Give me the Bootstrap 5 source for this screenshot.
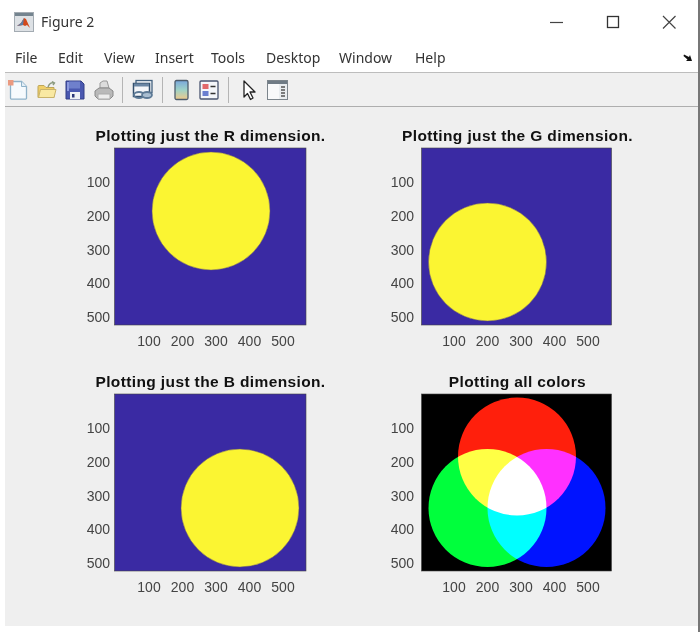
<!DOCTYPE html>
<html lang="en"><head><meta charset="utf-8"><title>Figure 2</title>
<link rel="stylesheet" href="https://cdn.jsdelivr.net/npm/bootstrap@5.3.0/dist/css/bootstrap.min.css">
<style>
html,body{margin:0;background:#fff;overflow:hidden}
body{font-family:"Noto Sans","Open Sans",sans-serif;color:#222}
.win{width:700px;height:632px;background:#fff;border-right:2px solid #777;filter:blur(.55px)}
.winbar{height:45px;padding:0 0 2px 14px;font-size:14px;color:#333}
.winbar .appico{margin-right:7px}
.winctl{margin-left:auto;padding-right:21px;gap:40.500px}
.menubar{height:27px;padding:0 5px 3px 15px;font-size:14px;color:#333}
.menubar span{display:block;white-space:nowrap}
.menubar span:nth-child(1){width:43px}
.menubar span:nth-child(2){width:46px}
.menubar span:nth-child(3){width:51px}
.menubar span:nth-child(4){width:56px}
.menubar span:nth-child(5){width:55px}
.menubar span:nth-child(6){width:73px}
.menubar span:nth-child(7){width:76px}
.menubar .corner{margin-left:auto}
.tools{margin-left:5px;height:35px;background:#f0f0f0;border-top:1px solid #bdbdbd;border-bottom:1px solid #aeaeae;padding-left:3px;gap:8.500px}
.tools .tsep{width:1px;height:26px;background:#b5b5b5}
.stage{margin-left:5px;width:693px;height:519px;padding-top:1px;background:#efefef;display:grid;grid-template-columns:306.5px 1fr;grid-template-rows:246px 1fr}
.stage svg{display:block;overflow:visible}
.ttl{font:bold 15.5px "Liberation Sans",Arial,sans-serif;letter-spacing:.38px;fill:#111;text-anchor:middle}
.tk{font:14px "Liberation Sans",Arial,sans-serif;fill:#444}
.tx{text-anchor:middle}.ty{text-anchor:end}
.axbg{fill:#3a2aa3;stroke:#444;stroke-width:.6}
.axblk{fill:#000;stroke:#444;stroke-width:.6}
.sun{fill:#fbf532;stroke:#6b5a6a;stroke-width:.5}
.mix{isolation:isolate}
.mix circle{mix-blend-mode:screen}
</style></head><body>
<div class="win">
 <div class="winbar d-flex align-items-center">
  <svg class="appico" width="20" height="20" viewBox="0 0 20 20"><rect x=".5" y=".5" width="19" height="19" fill="#dde1e5" stroke="#a3abb2"/><rect x="1" y="1" width="18" height="3" fill="#74848f"/><path d="M3 14l4-3 3-5 2 1 4 9-3-3-2 1-2-1z" fill="#d2491c"/><path d="M3 14l4-3 3-5-1 7z" fill="#5a7fa8"/></svg>
  <span>Figure 2</span>
  <div class="winctl d-flex align-items-center">
   <svg width="16" height="16" viewBox="0 0 16 16"><path d="M2 8.500h13" stroke="#444" stroke-width="1.200"/></svg>
   <svg width="16" height="16" viewBox="0 0 16 16"><rect x="2.500" y="2.500" width="11" height="11" fill="none" stroke="#333" stroke-width="1.300"/></svg>
   <svg width="16" height="16" viewBox="0 0 16 16"><path d="M2 2l12.500 12.500M14.500 2L2 14.500" stroke="#444" stroke-width="1.200"/></svg>
  </div>
 </div>
 <div class="menubar d-flex align-items-center">
  <span>File</span><span>Edit</span><span>View</span><span>Insert</span><span>Tools</span><span>Desktop</span><span>Window</span><span>Help</span>
  <svg class="corner" width="10" height="9" viewBox="0 0 10 9"><path d="M1 1.500l5 2.500 1-2 2 6-6 0 1.500-1.500L.500 3z" fill="#111"/></svg>
 </div>
 <div class="tools d-flex align-items-center">
  <svg width="20" height="22" viewBox="0 0 20 22"><path d="M2.500 2.500h11l5 5v11.500a1.200 1.200 0 0 1-1.200 1.200H3.700a1.200 1.200 0 0 1-1.200-1.200z" fill="#f6fafd" stroke="#8fb2c9" stroke-width="1.300"/><path d="M13.500 2.500v5h5" fill="#e3eef6" stroke="#8fb2c9"/><rect x="0" y="1" width="5.500" height="5.500" fill="#ea9a80"/></svg>
  <svg width="20" height="22" viewBox="0 0 20 22"><path d="M1 18.500V7.500a1 1 0 0 1 1-1h5l2 2h8v10z" fill="#f0cf68" stroke="#bda558"/><path d="M1.500 18.500l2-8h15.500l-2 8z" fill="#f9e9a2" stroke="#c9b36a"/><path d="M11 8c1-3 3-5 6-4M15 2.500l2.500 1.500-1.500 2" fill="none" stroke="#8b9a7e" stroke-width="1.400"/></svg>
  <svg width="20" height="22" viewBox="0 0 20 22"><path d="M1 2h15l3 3v15H1z" fill="#4a58b0" stroke="#333f86"/><rect x="4" y="2.500" width="11" height="7" fill="#6f80cc"/><path d="M2 3h2v9H2z" fill="#8d9ade"/><rect x="5" y="13" width="10" height="7" fill="#eef0f6"/><rect x="7" y="15" width="2.500" height="3.500" fill="#2a3678"/></svg>
  <svg width="20" height="22" viewBox="0 0 20 22"><path d="M6 9l0-5 3-2h4l2 7z" fill="#dcdcdc" stroke="#999"/><path d="M1 12l4-3h10l4 3v5l-3 3H4l-3-3z" fill="#b9b9b9" stroke="#888"/><path d="M4 15h12v5H4z" fill="#ececec" stroke="#aaa"/></svg>
  <div class="tsep"></div>
  <svg width="22" height="22" viewBox="0 0 22 22"><rect x="4" y="1.500" width="16" height="12" fill="#eef2f6" stroke="#44627f" stroke-width="1.300"/><rect x="1.500" y="4.500" width="16" height="13" fill="#f4f6f9" stroke="#34506d" stroke-width="1.500"/><rect x="2" y="4.500" width="15" height="3" fill="#6a86a4"/><ellipse cx="7" cy="16" rx="5" ry="3" fill="none" stroke="#5d7a96" stroke-width="1.800"/><ellipse cx="15" cy="16" rx="5" ry="3" fill="#a9bed1" stroke="#5d7a96" stroke-width="1.800"/></svg>
  <div class="tsep"></div>
  <svg width="19" height="22" viewBox="0 0 19 22"><defs><linearGradient id="cb" x1="0" y1="0" x2="0" y2="1"><stop offset="0" stop-color="#79a7dd"/><stop offset=".5" stop-color="#9fd3c6"/><stop offset="1" stop-color="#efc98a"/></linearGradient></defs><rect x="3" y="1.500" width="13" height="19" rx="1.500" fill="url(#cb)" stroke="#4d5c6c" stroke-width="1.300"/></svg>
  <svg width="20" height="22" viewBox="0 0 20 22"><rect x="1" y="2" width="18" height="18" rx="1" fill="#f4f6fa" stroke="#4a5570" stroke-width="1.300"/><rect x="3.500" y="5" width="6" height="5" fill="#e2686a"/><rect x="3.500" y="12" width="6" height="5" fill="#6a7fd0"/><path d="M11.500 7.500h5M11.500 14.500h5" stroke="#333" stroke-width="1.500"/></svg>
  <div class="tsep"></div>
  <svg class="ms-1" width="17" height="22" viewBox="0 0 17 22"><path d="M3 2l11 11h-5l3 6-2.500 1.500-3-6L3 18z" fill="#fff" stroke="#222" stroke-width="1.300" stroke-linejoin="round"/></svg>
  <svg width="21" height="22" viewBox="0 0 21 22"><rect x=".5" y="1.500" width="20" height="19" fill="#e9edf0" stroke="#7c858c"/><rect x="1" y="2" width="19" height="3" fill="#6f7b85"/><rect x="1" y="5" width="11" height="15" fill="#f8f9fa"/><path d="M14 8h4M14 11h4M14 14h4M14 17h4" stroke="#555" stroke-width="1.300"/></svg>
 </div>
 <div class="stage">
  <svg width="306.5" height="246">
   <text class="ttl" x="205.500" y="33">Plotting just the R dimension.</text>
   <rect class="axbg" x="109.500" y="40" width="191.500" height="177"/>
   <circle class="sun" cx="206" cy="103" r="59"/>
   <g class="tk ty"><text x="105" y="79">100</text><text x="105" y="113">200</text><text x="105" y="146.500">300</text><text x="105" y="180">400</text><text x="105" y="213.500">500</text></g>
   <g class="tk tx"><text x="144" y="238">100</text><text x="177.500" y="238">200</text><text x="211" y="238">300</text><text x="244.500" y="238">400</text><text x="278" y="238">500</text></g>
  </svg>
  <svg width="382" height="246">
   <text class="ttl" x="205.500" y="33">Plotting just the G dimension.</text>
   <rect class="axbg" x="109.500" y="40" width="190" height="177"/>
   <circle class="sun" cx="175.500" cy="154" r="59"/>
   <g class="tk ty"><text x="102" y="79">100</text><text x="102" y="113">200</text><text x="102" y="146.500">300</text><text x="102" y="180">400</text><text x="102" y="213.500">500</text></g>
   <g class="tk tx"><text x="142" y="238">100</text><text x="175.500" y="238">200</text><text x="209" y="238">300</text><text x="242.500" y="238">400</text><text x="276" y="238">500</text></g>
  </svg>
  <svg width="306.5" height="272">
   <text class="ttl" x="205.500" y="33">Plotting just the B dimension.</text>
   <rect class="axbg" x="109.500" y="40" width="191.500" height="177"/>
   <circle class="sun" cx="235" cy="154" r="59"/>
   <g class="tk ty"><text x="105" y="79">100</text><text x="105" y="113">200</text><text x="105" y="146.500">300</text><text x="105" y="180">400</text><text x="105" y="213.500">500</text></g>
   <g class="tk tx"><text x="144" y="238">100</text><text x="177.500" y="238">200</text><text x="211" y="238">300</text><text x="244.500" y="238">400</text><text x="278" y="238">500</text></g>
  </svg>
  <svg width="382" height="272">
   <text class="ttl" x="205.500" y="33">Plotting all colors</text>
   <rect class="axblk" x="109.500" y="40" width="190" height="177"/>
   <g class="mix">
    <circle cx="205" cy="102.500" r="59" fill="#ff1f0c"/>
    <circle cx="175.500" cy="154" r="59" fill="#00ff3c"/>
    <circle cx="234.500" cy="154" r="59" fill="#0013ff"/>
   </g>
   <g class="tk ty"><text x="102" y="79">100</text><text x="102" y="113">200</text><text x="102" y="146.500">300</text><text x="102" y="180">400</text><text x="102" y="213.500">500</text></g>
   <g class="tk tx"><text x="142" y="238">100</text><text x="175.500" y="238">200</text><text x="209" y="238">300</text><text x="242.500" y="238">400</text><text x="276" y="238">500</text></g>
  </svg>
 </div>
</div>
<script src="https://cdn.jsdelivr.net/npm/bootstrap@5.3.0/dist/js/bootstrap.bundle.min.js"></script>
</body></html>
